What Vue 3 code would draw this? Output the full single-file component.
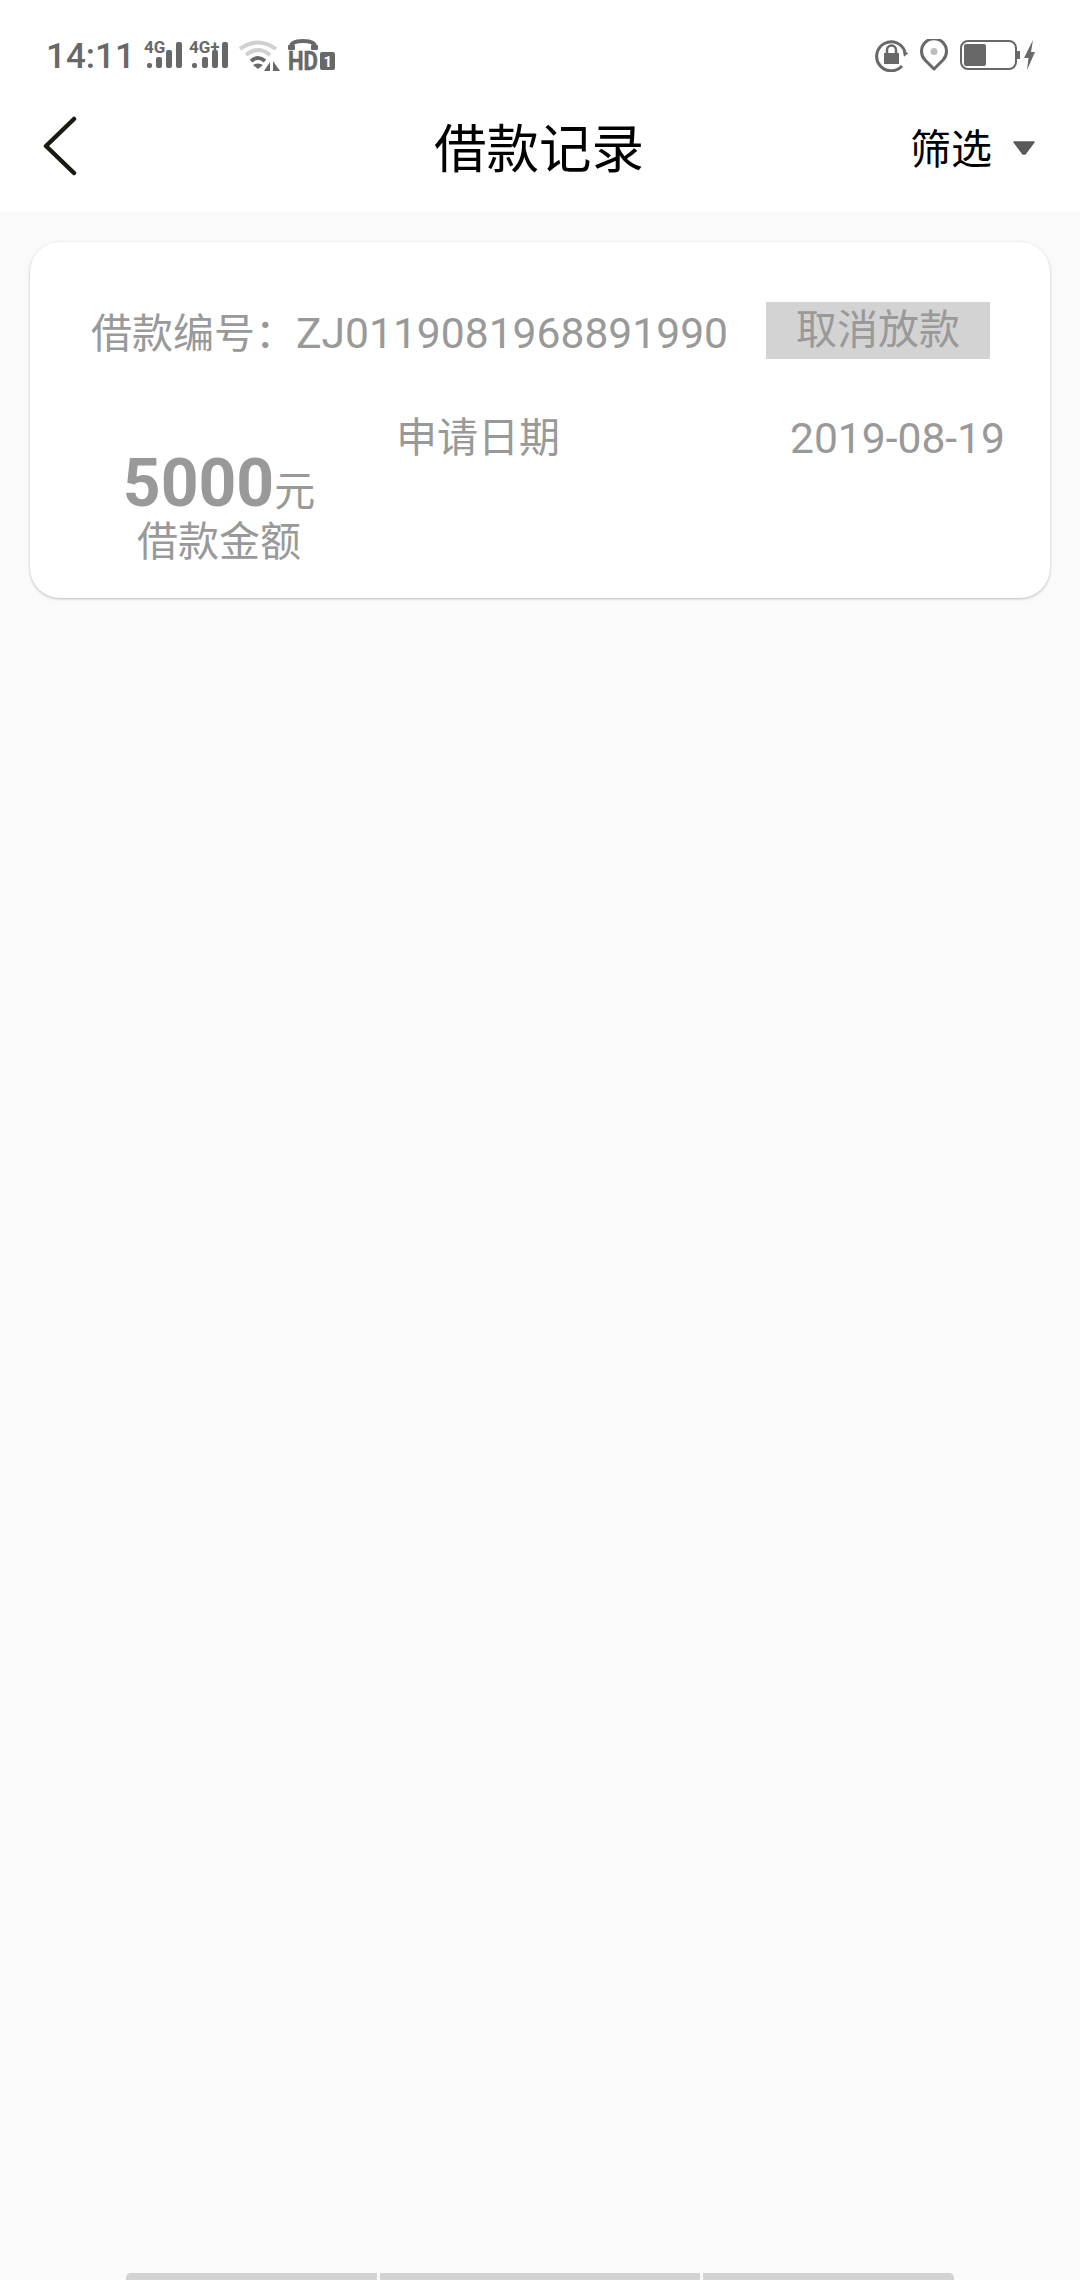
<template>
  <div class="page">
    <header class="top">
      <div class="status-bar">
        <span class="time">14:11</span>
        <svg class="ic-signal" width="40" height="36" viewBox="0 -6 40 36">
          <text x="0" y="12" class="net">4G</text>
          <rect x="3" y="22" width="5" height="5" rx="2" />
          <rect x="12" y="16" width="6" height="11" rx="2" />
          <rect x="22" y="9" width="6" height="18" rx="2" />
          <rect x="32" y="1" width="6" height="26" rx="2" />
        </svg>
        <svg class="ic-signal second" width="40" height="36" viewBox="0 -6 40 36">
          <text x="0" y="12" class="net">4G+</text>
          <rect x="3" y="22" width="5" height="5" rx="2" />
          <rect x="13" y="16" width="6" height="11" rx="2" />
          <rect x="23" y="9" width="6" height="18" rx="2" />
          <rect x="33" y="1" width="6" height="26" rx="2" />
        </svg>
        <svg class="ic-wifi" width="44" height="32" viewBox="0 0 44 32">
          <path d="M2 9 Q20 -4 38 9" fill="none" stroke="#d0d0d0" stroke-width="4" />
          <path d="M8 15 Q20 5 32 15" fill="none" stroke="#d0d0d0" stroke-width="4" />
          <path d="M13 21 Q20 15 27 21" fill="none" stroke="#686868" stroke-width="4" />
          <path d="M15 25 Q20 22 25 25 L20 29 Z" fill="#686868" />
          <path d="M32 22 V31 H26 Z" fill="#686868" />
          <path d="M35 21 V31 H42 Z" fill="#686868" />
        </svg>
        <svg class="ic-hd" width="48" height="40" viewBox="0 0 48 40">
          <path d="M3 8 Q3 2 15 2 Q27 2 27 8" fill="none" stroke="#686868" stroke-width="4" />
          <rect x="0" y="6" width="7" height="5" rx="1" fill="#686868" />
          <rect x="23" y="6" width="7" height="5" rx="1" fill="#686868" />
          <text x="0" y="31" class="hd" textLength="30" lengthAdjust="spacingAndGlyphs">HD</text>
          <rect x="32" y="13" width="15" height="18" rx="2" fill="#686868" />
          <text x="35.5" y="28" class="hd-one">1</text>
        </svg>
        <div class="status-right">
          <svg width="33" height="33" viewBox="0 0 33 33">
            <path d="M27 27 A14.5 14.5 0 1 1 30 13" fill="none" stroke="#686868" stroke-width="3" />
            <path d="M27 13 L33 13 L30 18 Z" fill="#686868" transform="rotate(20 30 15)" />
            <rect x="9" y="14" width="15" height="11" fill="#686868" />
            <path d="M12 14 V11 A4.5 4.5 0 0 1 21 11 V14" fill="none" stroke="#686868" stroke-width="2.5" />
          </svg>
          <svg class="ic-pin" width="28" height="32" viewBox="0 0 28 32">
            <path d="M14 30 L5 21 A12.5 12.5 0 1 1 23 21 Z" fill="none" stroke="#686868" stroke-width="3" stroke-linejoin="round" />
            <circle cx="14" cy="12.5" r="3.5" fill="#bdbdbd" />
          </svg>
          <svg class="ic-battery" width="76" height="31" viewBox="0 0 76 31">
            <rect x="1" y="1" width="55" height="28" rx="7" fill="none" stroke="#686868" stroke-width="2" />
            <rect x="4" y="4" width="22" height="22" rx="2" fill="#686868" />
            <rect x="57" y="11" width="3" height="8" fill="#686868" />
            <path d="M73 0 L64 18 L68.5 18 L67 30 L75 12 L71 12 Z" fill="#686868" />
          </svg>
        </div>
      </div>
      <nav class="nav">
        <svg class="back" width="36" height="60" viewBox="0 0 36 60">
          <path d="M32 3 L4 30 L32 57" fill="none" stroke="#1c1a10" stroke-width="4.5" stroke-linecap="round" stroke-linejoin="round" />
        </svg>
        <h1 class="title">借款记录</h1>
        <div class="filter">
          <span>筛选</span>
          <svg width="24" height="14" viewBox="0 0 24 14">
            <path d="M2 1 H22 L13 13 H11 Z" fill="#595959" stroke="#595959" stroke-width="1.5" stroke-linejoin="round" />
          </svg>
        </div>
      </nav>
    </header>

    <main class="list">
      <section class="card" v-for="item in records" :key="item.no">
        <div class="card-head">
          <span class="no">借款编号：<em>{{ item.no }}</em></span>
          <button class="cancel">取消放款</button>
        </div>
        <div class="card-body">
          <div class="amount">
            <div class="amount-value"><b>{{ item.amount }}</b>元</div>
            <div class="amount-label">借款金额</div>
          </div>
          <div class="date-row">
            <span>申请日期</span>
            <em>{{ item.date }}</em>
          </div>
        </div>
      </section>
    </main>

    <div class="tabs">
      <i></i><i></i><i></i>
    </div>
  </div>
</template>

<script setup>
import { ref } from 'vue'

const records = ref([
  { no: 'ZJ0119081968891990', amount: 5000, date: '2019-08-19' }
])
</script>

<style>
body {
  margin: 0;
  background: #fafafa;
}
</style>

<style scoped>
.page {
  width: 1080px;
  height: 2280px;
  display: flex;
  flex-direction: column;
  overflow: hidden;
  background: #fafafa;
  font-family: Roboto, "Noto Sans CJK SC", sans-serif;
  color: #999;
}

.top {
  height: 212px;
  background: #fff;
}

.status-bar {
  height: 84px;
  padding: 0 44px 0 46px;
  display: flex;
  align-items: flex-start;
  color: #686868;
}

.status-bar svg {
  display: block;
  margin-top: 35px;
  fill: #686868;
}

.time {
  margin-top: 36px;
  font-size: 35px;
  line-height: 41px;
  font-weight: 500;
  width: 98px;
}

.ic-signal.second {
  margin-left: 5px;
}

.ic-wifi {
  margin-left: 9px;
  margin-top: 40px !important;
}

.ic-hd {
  margin-left: 6px;
  margin-top: 39px !important;
}

.net {
  font-size: 17px;
  font-weight: 700;
}

.hd {
  font-size: 25px;
  font-weight: 700;
  stroke: #686868;
  stroke-width: 0.5px;
}

.hd-one {
  font-size: 15px;
  font-weight: 700;
  fill: #fff;
}

.status-right {
  margin-left: auto;
  display: flex;
  align-items: flex-start;
}

.status-right svg {
  margin-top: 39px;
}

.status-right .ic-pin {
  margin-left: 12px;
}

.status-right .ic-battery {
  margin-left: 12px;
  margin-top: 40px;
}

.nav {
  height: 128px;
  padding: 0 44px 0 42px;
  display: grid;
  grid-template-columns: 1fr auto 1fr;
  align-items: center;
}

.back {
  display: block;
  margin-top: -5px;
}

.title {
  margin: 3px 0 0;
  font-size: 52.5px;
  line-height: 60px;
  font-weight: 400;
  color: #000;
}

.filter {
  justify-self: end;
  margin-top: 3px;
  display: flex;
  align-items: center;
  gap: 20px;
  font-size: 41px;
  line-height: 48px;
  color: #000;
}

.filter svg {
  margin-top: -4px;
}

.list {
  padding: 30px 30px 0;
  flex: 1;
}

.card {
  height: 356px;
  box-sizing: border-box;
  padding: 58px 45px 0 61px;
  background: #fff;
  border-radius: 30px;
  box-shadow: 0 1px 3px rgba(0, 0, 0, 0.25);
}

.card-head {
  display: flex;
  align-items: center;
  padding-right: 15px;
  justify-content: space-between;
  font-size: 41px;
}

.no em,
.date-row em {
  font-style: normal;
  font-size: 42.6px;
}

.cancel {
  width: 224px;
  height: 57px;
  padding: 0;
  border: 0;
  background: #d3d3d3;
  color: #999;
  font: inherit;
  line-height: 57px;
}

.card-body {
  display: flex;
  margin-top: 54px;
}

.amount {
  width: 256px;
  margin-top: 33px;
  text-align: center;
  font-size: 41px;
  line-height: 48px;
  flex: none;
}

.amount-value {
  line-height: 74px;
}

.amount-value b {
  font-size: 66px;
  font-weight: 700;
}

.amount-label {
  margin-top: -11px;
}

.date-row {
  flex: 1;
  margin-left: 49px;
  display: flex;
  justify-content: space-between;
  font-size: 41px;
  line-height: 48px;
  height: 48px;
}

.tabs {
  height: 7px;
  margin: 0 126px;
  display: flex;
  gap: 3px;
}

.tabs i {
  display: block;
  background: #d3d3d3;
}

.tabs i:nth-child(1) {
  width: 251px;
  border-top-left-radius: 5px;
}

.tabs i:nth-child(2) {
  width: 320px;
}

.tabs i:nth-child(3) {
  flex: 1;
  border-top-right-radius: 5px;
}
</style>
